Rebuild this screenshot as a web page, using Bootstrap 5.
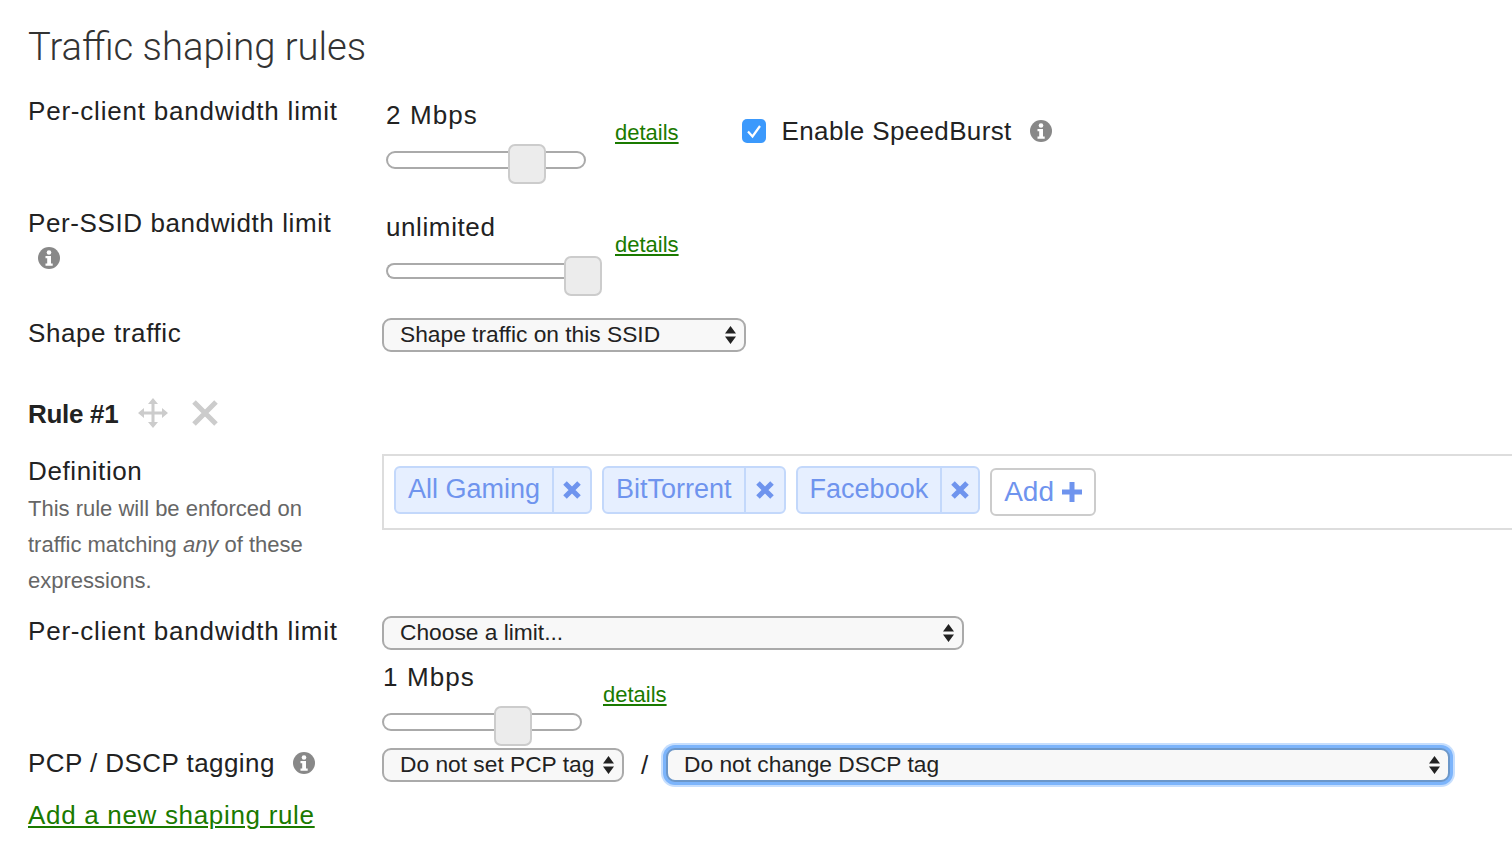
<!doctype html>
<html lang="en">
<head>
<meta charset="utf-8">
<title>Traffic shaping rules</title>
<link href="https://cdn.jsdelivr.net/npm/bootstrap@5.3.0/dist/css/bootstrap.min.css" rel="stylesheet">
<style>
html,body{overflow:hidden;height:844px}
body{font-family:"Liberation Sans",Arial,sans-serif;font-size:26px;line-height:36px;color:#222;background:#fff;padding:19px 0 0 28px;letter-spacing:.6px}
.page-title{font-family:Roboto,sans-serif;font-weight:300;font-size:38.2px;line-height:57px;margin:0 0 17px;color:#333;letter-spacing:0}
.lab{width:354px;flex:none}
.wide-text{letter-spacing:.8px}
.mbps-text{letter-spacing:1.1px}
.tag-text{letter-spacing:.44px}
.row-one{height:112px}
.row-two{height:110px}
.row-three{height:81px}
.row-rule{height:57px;font-weight:700;font-size:26px;letter-spacing:-.3px;line-height:34px;padding-top:1px}
.row-def{height:160px}
.row-limit{height:132px}
.row-tag{height:52px}
.val-col{width:233px;flex:none;padding-left:4px;padding-top:4px}
.val-col.shift{padding-left:1px;width:221px;padding-top:9px}
.shift .slide{margin-left:-1px}
.det,.add-link{color:#1a7a00;text-decoration:underline}
.det{font-size:22px;line-height:28px;margin-top:26px;letter-spacing:0}
.shift-det{margin-top:31px}
.slide{position:relative;width:200px;height:18px;border:2px solid #aaa;border-radius:9px;background:#fff;margin-top:18px}
.slide.thin{height:16px;margin-top:18px;width:216px;border-right:0}
.knob{position:absolute;top:-9px;width:38px;height:40px;background:#ececec;border:2px solid #ccc;border-radius:7px}
.burst{margin:20px 0 0 63px;letter-spacing:.35px}
.form-check-input.burst-box,.form-check-input.burst-box:checked[type=checkbox]{width:24px;height:24px;margin:0;background-color:#3b99fc;border:0;border-radius:5px;float:none;background-size:24px 24px;background-image:url("data:image/svg+xml,%3Csvg xmlns='http://www.w3.org/2000/svg' viewBox='0 0 24 24'%3E%3Cpath fill='none' stroke='%23fff' stroke-width='2.200' d='M6 12.500l4.500 5L18 7'/%3E%3C/svg%3E")}
.info{width:22px;height:22px;flex:none}
.info-gap{margin-left:18px}
.info-under{margin:6px 0 0 10px}
.info-tag{margin:7px 0 0 18px}
.sel{display:block;appearance:none;-webkit-appearance:none;height:34px;border:2px solid #aaa;border-radius:9px;background-color:#f8f8f8;background-image:url("data:image/svg+xml,%3Csvg xmlns='http://www.w3.org/2000/svg' width='11' height='18'%3E%3Cpath fill='%23222' d='M5.500 0l5.500 7.500H0zM5.500 18l5.500-7.500H0z'/%3E%3C/svg%3E");background-repeat:no-repeat;background-position:right 8px center;font-size:22.75px;line-height:28px;padding:0 26px 2px 16px;color:#222;font-family:inherit;outline:0;letter-spacing:0}
.sel-shape{width:364px;margin-top:3px}
.sel-limit{width:582px;margin-top:3px}
.sel-pcp{width:242px;margin-top:3px}
.sel-dscp{width:784px;margin-top:3px;border-color:#6c97c9;box-shadow:0 0 0 3px #7cb4fb,0 0 0 5px #c6defd}
.slash{width:42px;text-align:center;padding-top:2px}
.helptext{font-size:22px;color:#666;line-height:36px;margin-top:2px;letter-spacing:0}
.defbox{flex:1;height:76px;border:2px solid #ddd;border-right:0;padding:10px;margin-top:1px;letter-spacing:0}
.token{height:48px;border:2px solid #c3d8fb;border-radius:6px;background:#e6efff;color:#6f94ee;font-size:27px;line-height:42px;margin-right:10px}
.token-name{padding:0 12px}
.token-x{border-left:2px solid #c3d8fb;width:38px}
.token-x.wider{width:40px}
.add-btn{height:48px;margin-top:2px;border:2px solid #ccc;border-radius:6px;color:#6f94ee;font-size:28px;line-height:42px;padding:0 12px;background:#fff}
.add-link{font-size:26px;letter-spacing:.68px}
.move-ico{margin:1px 0 0 20px}
.close-ico{margin:3px 0 0 24px}
</style>
</head>
<body>
<h1 class="page-title">Traffic shaping rules</h1>

<div class="d-flex row-one">
  <div class="lab wide-text">Per-client bandwidth limit</div>
  <div class="val-col">
    <div class="mbps-text">2 Mbps</div>
    <div class="slide"><div class="knob" style="left:120px"></div></div>
  </div>
  <a href="#" class="det">details</a>
  <div class="burst d-flex align-items-center align-self-start">
    <input class="form-check-input burst-box" type="checkbox" checked>
    <span class="ms-3">Enable SpeedBurst</span>
    <svg class="info info-gap" viewBox="0 0 22 22"><circle cx="11" cy="11" r="11" fill="#888"/><circle cx="11" cy="5.500" r="2.300" fill="#fff"/><path fill="#fff" d="M7.500 9h5.500v7.500h1.700v2.200H7.500v-2.200h1.700v-5.300H7.500z"/></svg>
  </div>
</div>

<div class="d-flex row-two">
  <div class="lab">
    <div>Per-SSID bandwidth limit</div>
    <svg class="info d-block info-under" viewBox="0 0 22 22"><circle cx="11" cy="11" r="11" fill="#888"/><circle cx="11" cy="5.500" r="2.300" fill="#fff"/><path fill="#fff" d="M7.500 9h5.500v7.500h1.700v2.200H7.500v-2.200h1.700v-5.300H7.500z"/></svg>
  </div>
  <div class="val-col">
    <div>unlimited</div>
    <div class="slide thin"><div class="knob" style="left:176px"></div></div>
  </div>
  <a href="#" class="det">details</a>
</div>

<div class="d-flex row-three">
  <div class="lab">Shape traffic</div>
  <select class="sel sel-shape"><option>Shape traffic on this SSID</option></select>
</div>

<div class="d-flex align-items-start row-rule">
  <span>Rule #1</span>
  <svg class="move-ico" width="30" height="30" viewBox="0 0 30 30" fill="#ccc"><path d="M15 0l5 6h-3.500v7.500H24V10l6 5-6 5v-3.500h-7.500V24H20l-5 6-5-6h3.500v-7.500H6V20l-6-5 6-5v3.500h7.500V6H10z"/></svg>
  <svg class="close-ico" width="26" height="26" viewBox="0 0 26 26" stroke="#ccc" stroke-width="5"><path d="M2 2l22 22M24 2L2 24"/></svg>
</div>

<div class="d-flex row-def">
  <div class="lab">
    <div>Definition</div>
    <div class="helptext">This rule will be enforced on<br>traffic matching <em>any</em> of these<br>expressions.</div>
  </div>
  <div class="defbox d-flex align-items-start">
    <div class="token d-flex"><span class="token-name">All Gaming</span><span class="token-x d-flex align-items-center justify-content-center"><svg width="18" height="18" viewBox="0 0 18 18" stroke="#6f94ee" stroke-width="5"><path d="M2 2l14 14M16 2L2 16"/></svg></span></div>
    <div class="token d-flex"><span class="token-name">BitTorrent</span><span class="token-x wider d-flex align-items-center justify-content-center"><svg width="18" height="18" viewBox="0 0 18 18" stroke="#6f94ee" stroke-width="5"><path d="M2 2l14 14M16 2L2 16"/></svg></span></div>
    <div class="token d-flex"><span class="token-name">Facebook</span><span class="token-x d-flex align-items-center justify-content-center"><svg width="18" height="18" viewBox="0 0 18 18" stroke="#6f94ee" stroke-width="5"><path d="M2 2l14 14M16 2L2 16"/></svg></span></div>
    <div class="add-btn d-flex align-items-center">Add<svg class="ms-2" width="20" height="20" viewBox="0 0 20 20" fill="#6f94ee"><path d="M7.500 0h5v7.500H20v5h-7.500V20h-5v-7.500H0v-5h7.500z"/></svg></div>
  </div>
</div>

<div class="d-flex row-limit">
  <div class="lab wide-text">Per-client bandwidth limit</div>
  <div>
    <select class="sel sel-limit"><option>Choose a limit...</option></select>
    <div class="d-flex">
      <div class="val-col shift">
        <div class="mbps-text">1 Mbps</div>
        <div class="slide"><div class="knob" style="left:110px"></div></div>
      </div>
      <a href="#" class="det shift-det">details</a>
    </div>
  </div>
</div>

<div class="d-flex row-tag">
  <div class="lab d-flex align-items-start tag-text">PCP / DSCP tagging<svg class="info info-tag" viewBox="0 0 22 22"><circle cx="11" cy="11" r="11" fill="#888"/><circle cx="11" cy="5.500" r="2.300" fill="#fff"/><path fill="#fff" d="M7.500 9h5.500v7.500h1.700v2.200H7.500v-2.200h1.700v-5.300H7.500z"/></svg></div>
  <select class="sel sel-pcp"><option>Do not set PCP tag</option></select>
  <div class="slash">/</div>
  <select class="sel sel-dscp"><option>Do not change DSCP tag</option></select>
</div>

<a href="#" class="add-link">Add a new shaping rule</a>

<script src="https://cdn.jsdelivr.net/npm/bootstrap@5.3.0/dist/js/bootstrap.bundle.min.js"></script>
</body>
</html>
